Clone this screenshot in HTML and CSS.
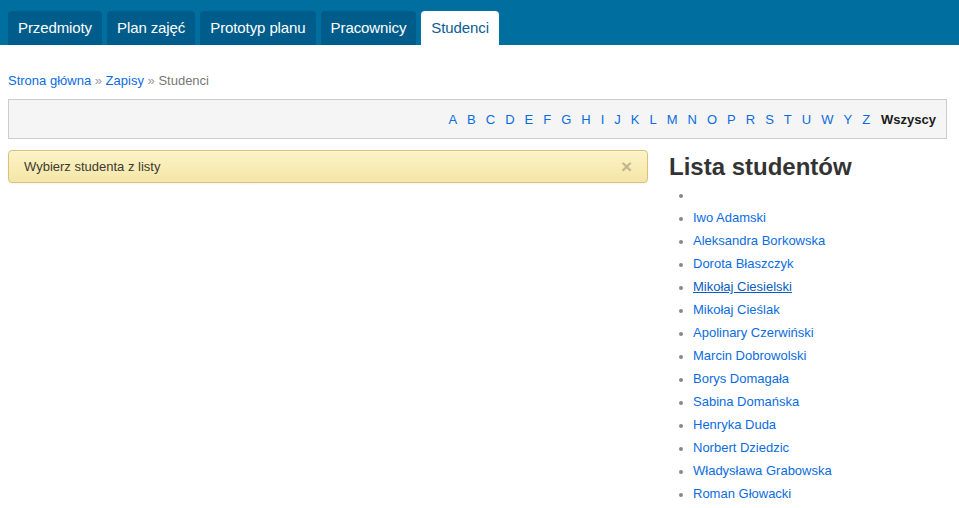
FILE: index.html
```html
<!DOCTYPE html>
<html lang="pl">
<head>
<meta charset="utf-8">
<title>Studenci</title>
<link rel="stylesheet" href="styles.css">
</head>
<body>
<header class="topbar">
  <nav class="tabs">
    <a class="tab" href="#">Przedmioty</a>
    <a class="tab" href="#">Plan zajęć</a>
    <a class="tab" href="#">Prototyp planu</a>
    <a class="tab" href="#">Pracownicy</a>
    <a class="tab active" href="#">Studenci</a>
  </nav>
</header>
<main class="page">
  <div class="breadcrumb">
    <a href="#">Strona główna</a> <span class="sep">»</span> <a href="#">Zapisy</a> <span class="sep">»</span> <span class="current">Studenci</span>
  </div>
  <div class="letters">
    <ul class="letter-list">
      <li><a href="#">A</a></li>
      <li><a href="#">B</a></li>
      <li><a href="#">C</a></li>
      <li><a href="#">D</a></li>
      <li><a href="#">E</a></li>
      <li><a href="#">F</a></li>
      <li><a href="#">G</a></li>
      <li><a href="#">H</a></li>
      <li><a href="#">I</a></li>
      <li><a href="#">J</a></li>
      <li><a href="#">K</a></li>
      <li><a href="#">L</a></li>
      <li><a href="#">M</a></li>
      <li><a href="#">N</a></li>
      <li><a href="#">O</a></li>
      <li><a href="#">P</a></li>
      <li><a href="#">R</a></li>
      <li><a href="#">S</a></li>
      <li><a href="#">T</a></li>
      <li><a href="#">U</a></li>
      <li><a href="#">W</a></li>
      <li><a href="#">Y</a></li>
      <li><a href="#">Z</a></li>
      <li class="all">Wszyscy</li>
    </ul>
  </div>
  <div class="columns">
    <section class="main-col">
      <div class="alert">
        <span>Wybierz studenta z listy</span>
        <span class="close">×</span>
      </div>
    </section>
    <aside class="side-col">
      <h2 class="side-title">Lista studentów</h2>
      <ul class="students">
        <li></li>
        <li><a href="#">Iwo Adamski</a></li>
        <li><a href="#">Aleksandra Borkowska</a></li>
        <li><a href="#">Dorota Błaszczyk</a></li>
        <li><a href="#" class="hover">Mikołaj Ciesielski</a></li>
        <li><a href="#">Mikołaj Cieślak</a></li>
        <li><a href="#">Apolinary Czerwiński</a></li>
        <li><a href="#">Marcin Dobrowolski</a></li>
        <li><a href="#">Borys Domagała</a></li>
        <li><a href="#">Sabina Domańska</a></li>
        <li><a href="#">Henryka Duda</a></li>
        <li><a href="#">Norbert Dziedzic</a></li>
        <li><a href="#">Władysława Grabowska</a></li>
        <li><a href="#">Roman Głowacki</a></li>
      </ul>
    </aside>
  </div>
</main>
</body>
</html>
```

FILE: styles.css
```css
* { box-sizing: border-box; }
html, body { margin: 0; padding: 0; }
body {
  font-family: "Liberation Sans", Arial, sans-serif;
  font-size: 13px;
  color: #333;
  background: #fff;
  overflow: hidden;
  height: 508px;
}
a { color: #0b6ce0; text-decoration: none; }

.topbar {
  background: #006f9f;
  height: 45px;
  padding: 11px 8px 0;
}
.tabs { display: flex; gap: 5px; height: 34px; }
.tab {
  display: block;
  background: #005d8b;
  color: #fff;
  font-size: 15px;
  letter-spacing: -0.1px;
  line-height: 34px;
  padding: 0 10px;
  border-radius: 4px 4px 0 0;
}
.tab.active { background: #fff; color: #0b5d93; }

.page { padding: 0 12px 0 8px; }

.breadcrumb {
  padding-top: 28px;
  height: 54px;
  line-height: 15px;
  color: #777;
}
.breadcrumb .sep { color: #999; }
.breadcrumb .current { color: #777; }

.letters {
  background: #f5f5f5;
  border: 1px solid #ccc;
  height: 40px;
  padding: 1px 10px 0;
  display: flex;
  align-items: center;
  justify-content: flex-end;
}
.letter-list {
  list-style: none;
  margin: 0;
  padding: 0;
  display: flex;
  align-items: center;
}
.letter-list li { padding: 0 5px; line-height: 18px; }
.letter-list li:last-child { padding-right: 0; padding-left: 6px; }
.letter-list .all { color: #1a1a1a; font-weight: bold; }

.columns {
  display: flex;
  gap: 21px;
  margin-top: 11px;
}
.main-col { width: 640px; flex: none; }
.side-col { flex: 1; }

.alert {
  position: relative;
  height: 33px;
  padding: 0 15px;
  display: flex;
  align-items: center;
  justify-content: space-between;
  background: linear-gradient(to bottom, #fcf3c6 0%, #f5e6a8 100%);
  border: 1px solid #d9c178;
  border-radius: 4px;
  color: #3e3a30;
  box-shadow: inset 0 1px 0 rgba(255,255,255,.25), 0 1px 2px rgba(0,0,0,.05);
}
.alert .close {
  font-size: 19px;
  font-weight: bold;
  color: #c4b68a;
  line-height: 1;
}

.side-title {
  margin: 0;
  font-size: 24px;
  font-weight: bold;
  color: #333;
  line-height: 30px;
  padding-top: 2px;
}
.students {
  margin: 1px 0 0;
  padding-left: 24px;
  line-height: 23px;
}
.students li { color: #888; height: 23px; }
.students li::marker { color: #888; font-size: 12px; }
.students a.hover { text-decoration: underline; color: #0a5cc0; }
```
